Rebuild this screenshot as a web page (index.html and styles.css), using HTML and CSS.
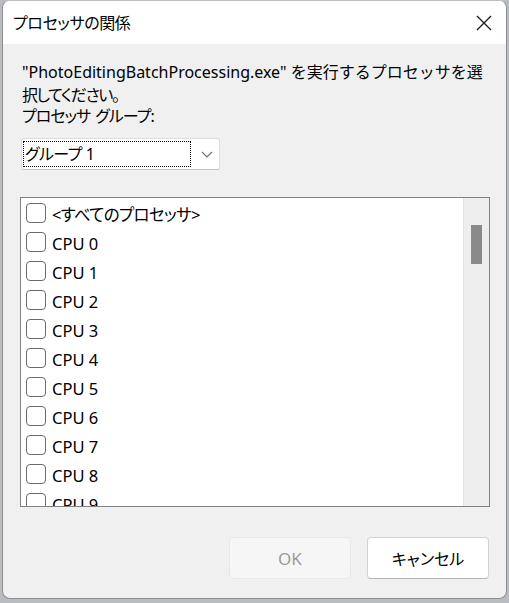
FILE: index.html
```html
<!DOCTYPE html>
<html lang="ja">
<head>
<meta charset="utf-8">
<title>プロセッサの関係</title>
<link rel="stylesheet" href="styles.css">
</head>
<body>
<div class="dialog">
  <div class="titlebar">
    <span class="title">プロセッサの関係</span>
    <span class="close">
      <svg width="16" height="16" viewBox="0 0 16 16"><path d="M1 1L15 15M15 1L1 15" stroke="#1a1a1a" stroke-width="1.3" fill="none"/></svg>
    </span>
  </div>
  <div class="content">
    <p class="intro"><span class="line1">"PhotoEditingBatchProcessing.exe" を実行するプロセッサを選</span><br><span class="jp">択してください。</span></p>
    <p class="label">プロセッサ グループ:</p>
    <div class="combo">
      <span class="combo-value">グループ 1</span>
      <svg class="chev" width="12" height="7" viewBox="0 0 12 7"><path d="M1 1L6 6L11 1" stroke="#707070" stroke-width="1.1" fill="none"/></svg>
    </div>
    <div class="listbox">
      <div class="items">
        <div class="row"><span class="cb"></span><span class="txt jp-tight">&lt;すべてのプロセッサ&gt;</span></div>
        <div class="row"><span class="cb"></span><span class="txt">CPU 0</span></div>
        <div class="row"><span class="cb"></span><span class="txt">CPU 1</span></div>
        <div class="row"><span class="cb"></span><span class="txt">CPU 2</span></div>
        <div class="row"><span class="cb"></span><span class="txt">CPU 3</span></div>
        <div class="row"><span class="cb"></span><span class="txt">CPU 4</span></div>
        <div class="row"><span class="cb"></span><span class="txt">CPU 5</span></div>
        <div class="row"><span class="cb"></span><span class="txt">CPU 6</span></div>
        <div class="row"><span class="cb"></span><span class="txt">CPU 7</span></div>
        <div class="row"><span class="cb"></span><span class="txt">CPU 8</span></div>
        <div class="row"><span class="cb"></span><span class="txt">CPU 9</span></div>
      </div>
      <div class="scrollbar"><div class="thumb"></div></div>
    </div>
    <div class="buttons">
      <button class="btn disabled">OK</button>
      <button class="btn">キャンセル</button>
    </div>
  </div>
</div>
</body>
</html>
```
FILE: styles.css
```css
html, body {
  margin: 0;
  padding: 0;
}
body {
  width: 509px;
  height: 603px;
  overflow: hidden;
  background: #b9bdc1;
  font-family: "Noto Sans", "Noto Sans CJK JP", sans-serif;
  font-feature-settings: "palt";
  color: #000;
}
.dialog {
  margin-left: 2px;
  width: 505px;
  height: 599px;
  box-sizing: border-box;
  border: 1px solid #8e8e8e;
  border-top-color: #c0c0c0;
  border-radius: 8px;
  overflow: hidden;
  background: #f0f0f0;
  display: flex;
  flex-direction: column;
}
.titlebar {
  height: 43px;
  background: #fff;
  display: flex;
  align-items: center;
  justify-content: space-between;
  padding-left: 10px;
  padding-right: 14px;
  flex: none;
}
.title {
  font-size: 16px;
  line-height: 20px;
  margin-top: 1px;
  letter-spacing: -0.4px;
}
.close {
  display: flex;
  width: 16px;
  height: 16px;
  margin-top: 1px;
}
.content {
  padding: 17px 17px 0 17px;
  display: flex;
  flex-direction: column;
}
.intro, .label {
  margin: 0 0 0 2px;
  font-size: 16px;
  line-height: 23px;
  white-space: nowrap;
}
.line1 {
  font-feature-settings: normal;
}
.jp {
  letter-spacing: -1.4px;
}
.jp-tight {
  letter-spacing: -0.7px;
}
.label {
  line-height: 21px;
  margin-top: -1px;
  letter-spacing: -1px;
  word-spacing: 2px;
}
.combo {
  margin: 11px 0 0 1px;
  width: 199px;
  height: 32px;
  box-sizing: border-box;
  background: #fff;
  border: 1px solid #dcdcdc;
  border-bottom-color: #c4c4c4;
  border-radius: 3px;
  display: flex;
  align-items: center;
  padding: 2px 0 2px 1px;
}
.combo-value {
  width: 168px;
  height: 26px;
  box-sizing: border-box;
  border: 1px dotted #000;
  font-size: 16px;
  line-height: 24px;
  padding-left: 1px;
  letter-spacing: -0.5px;
}
.chev {
  margin-left: 10px;
}
.listbox {
  margin-top: 27px;
  width: 470px;
  height: 310px;
  box-sizing: border-box;
  border: 1px solid #828282;
  background: #fff;
  display: flex;
  overflow: hidden;
}
.items {
  flex: 1;
  padding-left: 5px;
  overflow: hidden;
}
.row {
  height: 29px;
  display: flex;
  align-items: center;
  gap: 6px;
  font-size: 16.5px;
  white-space: nowrap;
}
.txt {
  padding-top: 3px;
}
.cb {
  width: 18px;
  height: 18px;
  border: 1px solid #6b6b6b;
  border-radius: 4px;
  background: #fff;
  flex: none;
}
.scrollbar {
  width: 26px;
  flex: none;
  background: #eeeeee;
  border-left: 1px solid #e4e4e4;
  box-sizing: border-box;
  padding: 27px 0 0 7px;
}
.thumb {
  width: 11px;
  height: 39px;
  background: #8a8a8a;
}
.buttons {
  margin-top: 30px;
  display: flex;
  justify-content: flex-end;
  gap: 16px;
}
.btn {
  width: 122px;
  height: 42px;
  box-sizing: border-box;
  border: 1px solid #d2d2d2;
  border-bottom-color: #b5b5b5;
  border-radius: 4px;
  background: #fff;
  font-family: "Noto Sans", "Noto Sans CJK JP", sans-serif;
  font-feature-settings: "palt";
  font-size: 16px;
  color: #000;
  padding: 0;
}
.btn.disabled {
  background: #f6f6f6;
  border-color: #e8e8e8;
  color: #9b9b9b;
  font-size: 17px;
}
```
